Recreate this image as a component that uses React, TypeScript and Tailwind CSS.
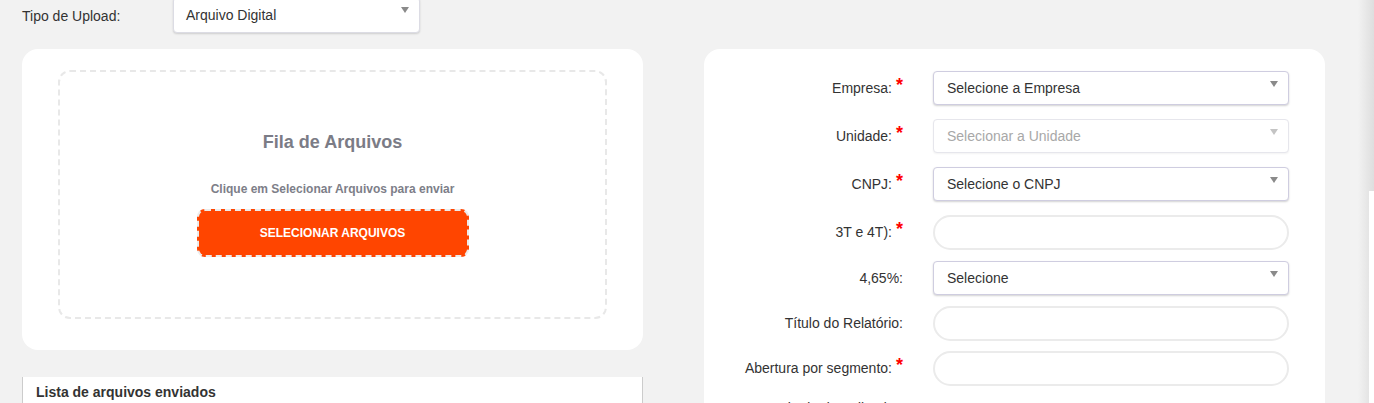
import React from 'react'

const font = { fontFamily: '"Liberation Sans", Arial, sans-serif' }

function Arrow({ muted }: { muted?: boolean }) {
  return (
    <svg className="absolute right-[10px] top-[9px]" width="8" height="6" viewBox="0 0 8 6">
      <path d="M0 0h8L4 6z" fill={muted ? '#c4c4c4' : '#8a8a8a'} />
    </svg>
  )
}

function SelectBox({ value, disabled }: { value: string; disabled?: boolean }) {
  return (
    <div
      className={
        'relative h-[34px] w-[356px] rounded-[4px] border bg-white pl-[13px] flex items-center text-[14px] ' +
        (disabled
          ? 'border-[#e6e6ec] text-[#a8a8a8] shadow-[0_1px_2px_rgba(0,0,0,0.05)]'
          : 'border-[#cfcde0] text-[#333] shadow-[0_1px_2px_rgba(0,0,0,0.18)]')
      }
    >
      {value}
      <Arrow muted={disabled} />
    </div>
  )
}

function TextBox() {
  return <div className="h-[35px] w-[356px] rounded-[18px] border-2 border-[#ebebeb] bg-white" />
}

interface Row {
  label: string
  required?: boolean
  kind: 'select' | 'text'
  value?: string
  disabled?: boolean
  height: string
}

const rows: Row[] = [
  { label: 'Empresa:', required: true, kind: 'select', value: 'Selecione a Empresa', height: 'h-[48px]' },
  { label: 'Unidade:', required: true, kind: 'select', value: 'Selecionar a Unidade', disabled: true, height: 'h-[48px]' },
  { label: 'CNPJ:', required: true, kind: 'select', value: 'Selecione o CNPJ', height: 'h-[48px]' },
  { label: '3T e 4T):', required: true, kind: 'text', height: 'h-[46px]' },
  { label: '4,65%:', kind: 'select', value: 'Selecione', height: 'h-[45px]' },
  { label: 'Título do Relatório:', kind: 'text', height: 'h-[45px]' },
  { label: 'Abertura por segmento:', required: true, kind: 'text', height: 'h-[45px]' },
]

export default function App() {
  return (
    <div className="h-[403px] w-full overflow-hidden bg-[#f2f2f2] flex text-[#333]" style={font}>
      <div className="flex-1 pl-[22px]">
        {/* top row */}
        <div className="flex items-center h-[33px]">
          <span className="text-[14px] w-[151px]">Tipo de Upload:</span>
          <div className="relative -mt-[3px] h-[36px] w-[247px] rounded-[4px] border border-[#dcdce4] bg-white pl-[12px] flex items-center text-[14px] shadow-[0_1px_2px_rgba(0,0,0,0.15)]">
            Arquivo Digital
            <Arrow />
          </div>
        </div>

        <div className="mt-[16px] flex gap-[61px]">
          {/* left column */}
          <div className="w-[621px]">
            <div className="h-[301px] rounded-[16px] bg-white pt-[21px] px-[36px]">
              <div className="h-[249px] rounded-[12px] border-2 border-dashed border-[#e8e8e8] flex flex-col items-center">
                <h2 className="mt-[59px] text-[18px] font-bold text-[#7b7c86] leading-[22px]">Fila de Arquivos</h2>
                <p className="mt-[29px] text-[12px] font-bold text-[#7d7e88] leading-[14px]">
                  Clique em Selecionar Arquivos para enviar
                </p>
                <button className="mt-[13px] h-[48px] w-[272px] rounded-[8px] border-2 border-dashed border-[#ececec] bg-[#ff4500] text-[12px] font-bold text-white">
                  SELECIONAR ARQUIVOS
                </button>
              </div>
            </div>
            <div className="mt-[27px] h-[60px] bg-white border-x border-[#cccccc] pl-[13px] pt-[3px]">
              <span className="text-[14px] font-bold text-[#333]">Lista de arquivos enviados</span>
            </div>
          </div>

          {/* right column */}
          <div className="w-[621px] h-[400px] rounded-t-[16px] bg-white pt-[22px]">
            {rows.map(r => (
              <div key={r.label} className={'flex items-start ' + r.height}>
                <div className="w-[199px] h-[34px] flex items-center justify-end text-[14px] text-[#333]">
                  <span>{r.label}</span>
                  {r.required && (
                    <span className="ml-[4px] -mt-[6px] text-[18px] font-bold leading-none text-[#ff0000]">*</span>
                  )}
                </div>
                <div className="ml-[30px]">
                  {r.kind === 'select' ? <SelectBox value={r.value || ''} disabled={r.disabled} /> : <TextBox />}
                </div>
              </div>
            ))}
            <div className="w-[199px] pt-[4px] text-right text-[14px] leading-[16px] text-[#333]">
              Resultado de Indicador:
            </div>
          </div>
        </div>
      </div>

      {/* right edge shading */}
      <div className="w-[16px] h-full flex flex-col bg-gradient-to-r from-[#f2f2f2] to-[#dedede]">
        <div className="h-[191px]" />
        <div className="ml-[11px] flex-1 bg-white" />
      </div>
    </div>
  )
}
